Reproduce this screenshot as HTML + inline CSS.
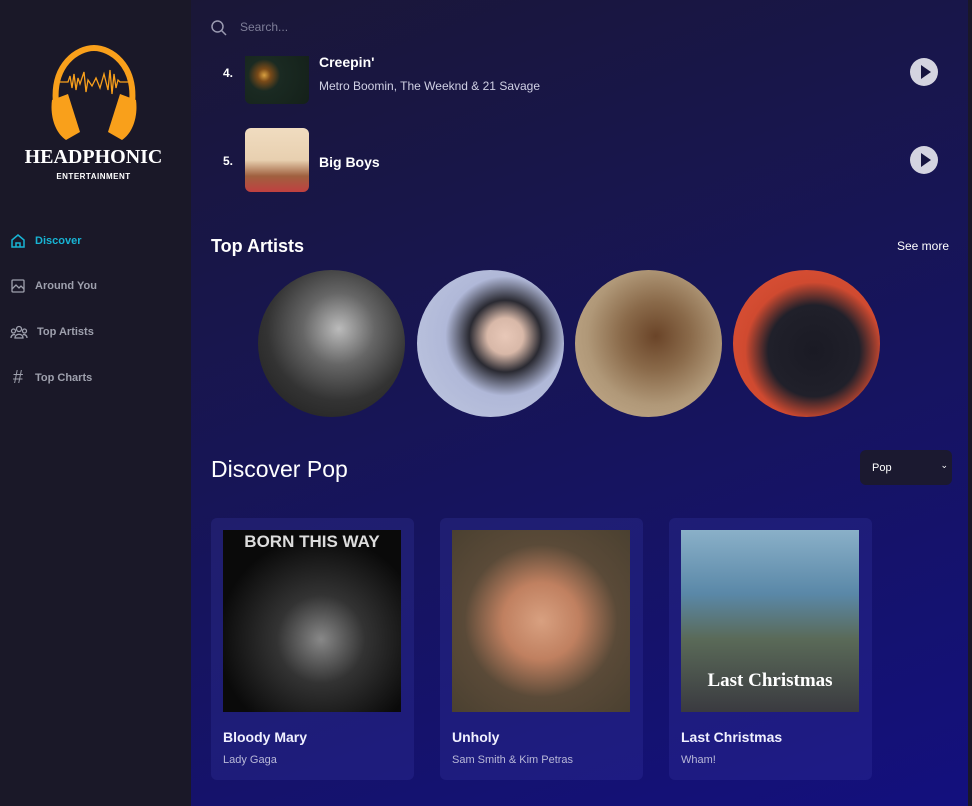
<!DOCTYPE html>
<html><head><meta charset="utf-8"><style>
*{margin:0;padding:0;box-sizing:border-box}
body{width:972px;height:806px;overflow:hidden;font-family:"Liberation Sans",sans-serif;background:#191832;position:relative;color:#fff}
.side{position:absolute;left:0;top:0;width:191px;height:806px;background:#1a1828}
.main{position:absolute;left:191px;top:0;width:777px;height:806px;background:linear-gradient(160deg,#1a1737 0%,#171556 45%,#13107e 100%)}
.sb{position:absolute;left:968px;top:0;width:4px;height:806px;background:#1a1828}
.abs{position:absolute}
.nav{position:absolute;left:10px;font-size:11px;font-weight:bold;color:#9ea0ad;display:flex;align-items:center;gap:9px}
.rowimg{position:absolute;left:245px;width:64px;border-radius:6px}
.play{position:absolute;left:910px;width:28px;height:28px;border-radius:50%;background:#d4d4e0}
.play:after{content:"";position:absolute;left:11px;top:7px;border-left:10px solid #16143f;border-top:7px solid transparent;border-bottom:7px solid transparent}
.circ{position:absolute;top:270px;width:147px;height:147px;border-radius:50%}
.card{position:absolute;top:518px;width:203px;height:262px;border-radius:6px;background:rgba(60,60,170,.25)}
.card .im{position:absolute;left:12px;top:12px;width:178px;height:182px}
.card .t{position:absolute;left:12px;top:211px;font-size:14px;font-weight:bold;color:#f0f0ff}
.card .a{position:absolute;left:12px;top:236px;font-size:11px;color:#b8b8d8}
</style></head><body>
<div class="side">
<svg class="abs" style="left:48px;top:44px" width="92" height="96" viewBox="0 0 92 96">
<path d="M8 60 C4 20 30 4 46 4 C62 4 88 20 84 60" fill="none" stroke="#f9a01b" stroke-width="6"/>
<path d="M4 56 L20 50 L32 88 L18 96 C6 88 2 70 4 56Z" fill="#f9a01b"/>
<path d="M88 56 L72 50 L60 88 L74 96 C86 88 90 70 88 56Z" fill="#f9a01b"/>
<path d="M12 38 L20 38 L22 32 L24 44 L26 30 L28 46 L30 34 L32 40 L36 28 L38 48 L40 36 L44 42 L48 34 L52 44 L56 30 L60 46 L62 26 L64 50 L66 30 L68 44 L70 36 L72 38 L80 38" fill="none" stroke="#f9a01b" stroke-width="1.3"/>
</svg>
<div class="abs" style="left:0;width:187px;top:146px;text-align:center;font-family:'Liberation Serif',serif;font-weight:bold;font-size:20px;letter-spacing:0">HEADPHONIC</div>
<div class="abs" style="left:0;width:187px;top:172px;text-align:center;font-size:8px;font-weight:bold;letter-spacing:0.5px">ENTERTAINMENT</div>
<div class="nav" style="top:233px;color:#18b4d4"><svg width="16" height="16" viewBox="0 0 16 16" fill="none" stroke="#18b4d4" stroke-width="1.5"><path d="M2 7 L8 2 L14 7 V14 H2Z M6 14 V10 H10 V14"/></svg>Discover</div>
<div class="nav" style="top:278px"><svg width="16" height="16" viewBox="0 0 16 16" fill="none" stroke="#9ea0ad" stroke-width="1.3"><rect x="2" y="2" width="12" height="12" rx="1"/><path d="M2 11 L6 7 L9 10 L11 8 L14 11"/></svg>Around You</div>
<div class="nav" style="top:324px"><svg width="18" height="16" viewBox="0 0 18 16" fill="none" stroke="#9ea0ad" stroke-width="1.3"><circle cx="9" cy="5" r="2.5"/><circle cx="3.5" cy="7" r="2"/><circle cx="14.5" cy="7" r="2"/><path d="M5 14 C5 9 13 9 13 14Z M1 14 C1 11 4 10 5 11 M17 14 C17 11 14 10 13 11"/></svg>Top Artists</div>
<div class="nav" style="top:367px"><span style="font-size:18px;font-weight:normal;width:16px;text-align:center">#</span>Top Charts</div>
</div>
<div class="main"></div>
<div class="sb"></div>
<svg class="abs" style="left:210px;top:19px" width="18" height="18" viewBox="0 0 18 18" fill="none" stroke="#9a9ab0" stroke-width="1.5"><circle cx="7.5" cy="7.5" r="5.5"/><path d="M11.5 11.5 L16 16"/></svg>
<div class="abs" style="left:240px;top:20px;font-size:12px;color:#7e7e98">Search...</div>
<div class="abs" style="left:223px;top:66px;font-size:12px;font-weight:bold">4.</div>
<div class="rowimg" style="top:56px;height:48px;border-radius:0 0 6px 6px;background:radial-gradient(circle at 30% 40%,#d8a040 0,#7a4a18 12%,#1a2a22 30%,#142019 100%)"></div>
<div class="abs" style="left:319px;top:54px;font-size:14px;font-weight:bold">Creepin'</div>
<div class="abs" style="left:319px;top:79px;font-size:12px;color:#d0d0e4">Metro Boomin, The Weeknd &amp; 21 Savage</div>
<div class="play" style="top:58px"></div>
<div class="abs" style="left:223px;top:154px;font-size:12px;font-weight:bold">5.</div>
<div class="rowimg" style="top:128px;height:64px;background:linear-gradient(180deg,#f0dcc0 0%,#e8d0b0 50%,#a0603f 75%,#c04040 100%)"></div>
<div class="abs" style="left:319px;top:154px;font-size:14px;font-weight:bold">Big Boys</div>
<div class="play" style="top:146px"></div>
<div class="abs" style="left:211px;top:236px;font-size:18px;font-weight:bold">Top Artists</div>
<div class="abs" style="left:897px;top:239px;font-size:12px">See more</div>
<div class="circ" style="left:258px;background:radial-gradient(circle at 55% 40%,#bbb 0,#666 30%,#333 60%,#1a1a1a 100%)"></div>
<div class="circ" style="left:417px;background:radial-gradient(circle at 60% 45%,#e8c8b8 0,#d8b8a8 15%,#2a2a32 30%,#b0b8d8 50%,#c0c8e0 100%)"></div>
<div class="circ" style="left:575px;background:radial-gradient(circle at 55% 45%,#6a4428 0,#8a6a4a 30%,#b09878 60%,#c8b090 100%)"></div>
<div class="circ" style="left:733px;background:radial-gradient(circle at 55% 55%,#1a1a24 0,#20202a 40%,#d04a30 60%,#e05438 100%)"></div>
<div class="abs" style="left:211px;top:456px;font-size:23px">Discover Pop</div>
<div class="abs" style="left:860px;top:450px;width:92px;height:35px;border-radius:6px;background:#1b1930;font-size:11px;padding:12px 0 0 12px">Pop<span style="position:absolute;right:4px;top:10px;font-size:9px">&#8964;</span></div>
<div class="card" style="left:211px"><div class="im" style="background:radial-gradient(circle at 55% 60%,#888 0,#333 30%,#0a0a0a 70%)"></div><div class="abs" style="left:12px;top:14px;width:178px;text-align:center;font-size:17px;font-weight:bold;color:#ddd">BORN THIS WAY</div><div class="t">Bloody Mary</div><div class="a">Lady Gaga</div></div>
<div class="card" style="left:440px"><div class="im" style="background:radial-gradient(circle at 50% 50%,#d8a080 0,#c08060 30%,#5a4a38 60%,#4a4030 100%)"></div><div class="t">Unholy</div><div class="a">Sam Smith &amp; Kim Petras</div></div>
<div class="card" style="left:669px"><div class="im" style="background:linear-gradient(180deg,#8ab0c8 0%,#5a88a8 35%,#5a6a58 60%,#3a3a40 100%)"></div><div class="abs" style="left:12px;top:152px;width:178px;text-align:center;font-family:'Liberation Serif',serif;font-size:19px;font-weight:bold">Last Christmas</div><div class="t">Last Christmas</div><div class="a">Wham!</div></div>
</body></html>
